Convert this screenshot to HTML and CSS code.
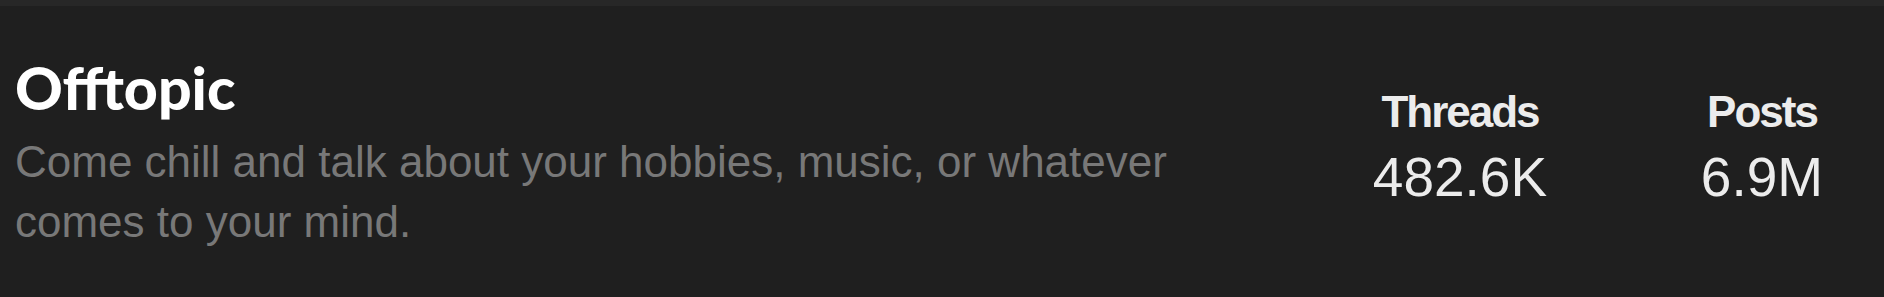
FILE: index.html
```html
<!DOCTYPE html>
<html lang="en">

<head>
    <meta charset="UTF-8">
    <meta name="viewport" content="width=device-width, initial-scale=1.0">
    <title>Offtopic</title>
    <link rel="stylesheet" href="styles.css">
</head>

<body>
    <div class="top-bar"></div>

    <div class="forum-row">
        <div class="forum-info">
            <h2 class="forum-title">Offtopic</h2>
            <p class="forum-desc">Come chill and talk about your hobbies, music, or whatever comes to your mind.</p>
        </div>

        <div class="forum-stats">
            <div class="stat">
                <span class="stat-label">Threads</span>
                <span class="stat-value">482.6K</span>
            </div>
            <div class="stat">
                <span class="stat-label">Posts</span>
                <span class="stat-value">6.9M</span>
            </div>
        </div>
    </div>
</body>

</html>
```

FILE: styles.css
```css
* {
    margin: 0;
    padding: 0;
    box-sizing: border-box;
}

body {
    font-family: 'Liberation Sans', Arial, sans-serif;
    background: #1f1f1f;
    height: 297px;
    overflow: hidden;
}

.top-bar {
    height: 6px;
    background: #272727;
}

.forum-row {
    display: flex;
    justify-content: space-between;
    align-items: flex-start;
    padding: 50px 22px 0 15px;
}

.forum-info {
    width: 1180px;
}

.forum-title {
    font-family: 'Lato', 'Noto Sans', sans-serif;
    font-weight: 900;
    font-size: 59px;
    line-height: 64px;
    color: #ffffff;
}

.forum-desc {
    margin-top: 12px;
    font-size: 44px;
    line-height: 60px;
    color: #787878;
}

.forum-stats {
    display: flex;
    gap: 102px;
    padding-top: 31px;
}

.stat {
    width: 200px;
    display: flex;
    flex-direction: column;
    align-items: center;
    color: #ececec;
}

.stat-label {
    font-weight: 700;
    font-size: 44px;
    line-height: 50px;
    letter-spacing: -2px;
}

.stat-value {
    margin-top: 8px;
    font-size: 55px;
    line-height: 64px;
}
```
